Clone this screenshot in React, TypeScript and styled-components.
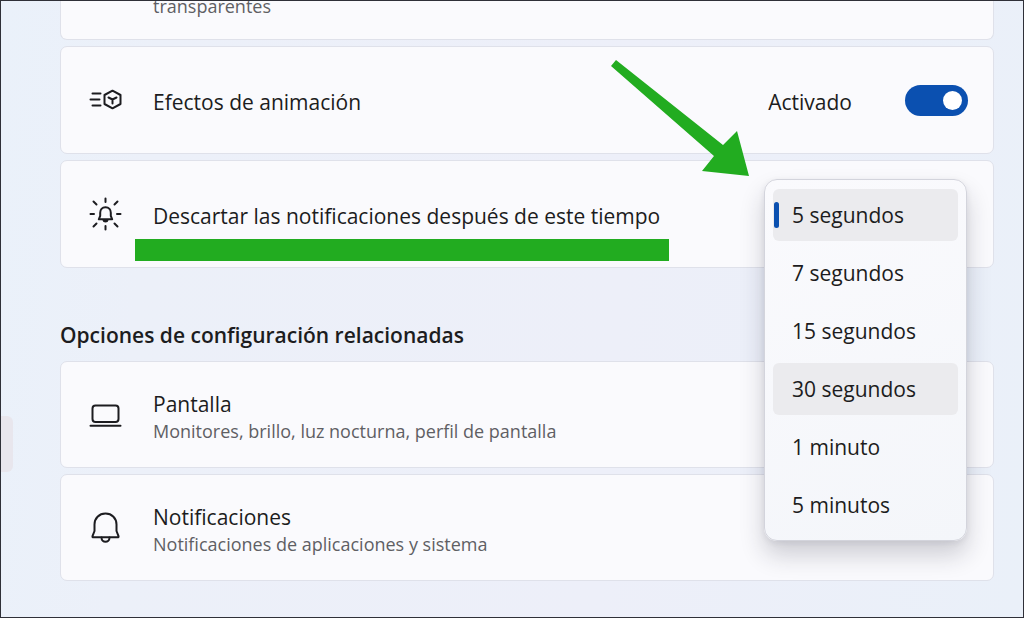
import { useState } from "react";
import styled, { createGlobalStyle } from "styled-components";

const GlobalStyle = createGlobalStyle`
  *, *::before, *::after { box-sizing: border-box; }
  body {
    margin: 0;
    color: #1c1c20;
    font-family: "Open Sans", "Noto Sans", sans-serif;
    font-size: 21px;
    line-height: 28px;
  }
  button, input { font: inherit; color: inherit; }
`;

const Window = styled.div`
  position: relative;
  min-height: 100vh;
  padding: 0 29px 35px 59px;
  overflow: hidden;
  border: 1px solid #2f3038;
  background: linear-gradient(95deg, #eaf1fa 0%, #ecf0f9 15%, #edeff9 60%, #eaf0f9 100%);
`;

const PaneHandle = styled.div`
  position: absolute;
  left: 0;
  top: 415px;
  width: 12px;
  height: 56px;
  border-radius: 0 6px 6px 0;
  background: #e8e6ed;
`;

const List = styled.section`
  display: flex;
  flex-direction: column;
  gap: 6px;
`;

const Card = styled.div<{ $tall?: boolean }>`
  position: relative;
  display: flex;
  align-items: center;
  min-height: ${(p) => (p.$tall ? 108 : 107)}px;
  padding: 0 25px 0 28px;
  border: 1px solid #dfe1ea;
  border-radius: 7px;
  background: #fafafd;
`;

const CutCard = styled(Card)`
  align-items: flex-start;
  min-height: 39px;
  padding-left: 92px;
  border-top: 0;
  border-radius: 0 0 7px 7px;
`;

const LinkCard = styled(Card).attrs({ as: "a" })`
  color: inherit;
  text-decoration: none;
`;

const IconBox = styled.span`
  display: flex;
  flex: none;
  width: 64px;
`;

const Texts = styled.div`
  display: flex;
  flex: 1;
  flex-direction: column;
  padding-top: 4px;
`;

const Title = styled.span`
  position: relative;
  align-self: flex-start;
`;

const Detail = styled.span`
  color: #5f5f64;
  font-size: 18px;
  line-height: 26px;
`;

const CutDetail = styled(Detail)`
  line-height: 10px;
`;

const Heading = styled.h2`
  margin: 53px 0 12px;
  font-size: 21px;
  font-weight: 600;
  line-height: 28px;
`;

const SwitchLabel = styled.label`
  display: flex;
  align-items: center;
  gap: 53px;
`;

const SwitchText = styled.span`
  padding-top: 4px;
`;

const Switch = styled.input`
  appearance: none;
  width: 63px;
  height: 31px;
  margin: 0;
  padding: 6px;
  border-radius: 16px;
  background: #8a8a90;
  &::before {
    content: "";
    display: block;
    width: 19px;
    height: 19px;
    border-radius: 50%;
    background: #fff;
  }
  &:checked { background: #0b50b0; }
  &:checked::before { margin-left: auto; }
`;

const Underline = styled.span`
  position: absolute;
  top: 37px;
  left: -18px;
  right: -9px;
  height: 22px;
  background: #22ac20;
`;

const Menu = styled.div`
  position: absolute;
  z-index: 2;
  top: 18px;
  right: 26px;
  display: flex;
  flex-direction: column;
  gap: 6px;
  width: 203px;
  padding: 9px 8px;
  border: 1px solid #d3d4dc;
  border-radius: 13px;
  background: linear-gradient(160deg, #fafafd, #f4f6fa);
  box-shadow: 0 14px 24px rgba(30, 30, 50, 0.2), 0 2px 6px rgba(30, 30, 50, 0.08);
`;

const Option = styled.button<{ $active: boolean }>`
  position: relative;
  height: 52px;
  padding: 0 19px;
  border: 0;
  border-radius: 6px;
  background: ${(p) => (p.$active ? "#ebebee" : "transparent")};
  text-align: left;
  &[aria-selected="true"]::before {
    content: "";
    position: absolute;
    left: 1px;
    top: 13px;
    width: 5px;
    height: 26px;
    border-radius: 3px;
    background: #0b50b0;
  }
`;

const Arrow = styled.svg`
  position: absolute;
  z-index: 3;
  top: -101px;
  right: 243px;
`;

const svgProps = {
  width: 34,
  height: 36,
  viewBox: "0 0 34 36",
  fill: "none",
  stroke: "#1c1c20",
  strokeWidth: 2,
  strokeLinecap: "round" as const,
  strokeLinejoin: "round" as const,
  "aria-hidden": true,
};

const AnimationIcon = () => (
  <svg {...svgProps}>
    <path d="M3.5 11.5H11.5M1.5 17.5H10.5M3.5 23.5H11.5" />
    <path d="M23.5 8.7L31.5 13V22L23.5 26.3L15.5 22V13Z" />
    <path d="M19.5 15.5L23.5 17.5L27.5 15.5M23.5 17.5V21.5" />
  </svg>
);

const AlertIcon = () => (
  <svg {...svgProps}>
    <path d="M16.5 2.5V6M16.5 30V33.5M1.5 18H5M28 18H31.5M4.5 5.5L7.5 8.5M28.5 5.5L25.5 8.5M4.5 30.5L7.5 27.5M28.5 30.5L25.5 27.5" />
    <path d="M16.5 11.2C13 11.2 11.2 13.8 11.2 16.7V19.8L9.8 23.3H23.2L21.8 19.8V16.7C21.8 13.8 20 11.2 16.5 11.2Z" />
    <path d="M14.5 24C14.8 26 18.2 26 18.5 24Z" fill="#1c1c20" />
  </svg>
);

const LaptopIcon = () => (
  <svg {...svgProps}>
    <rect x="3.5" y="8.5" width="26" height="16.5" rx="3" />
    <path d="M1.5 28.7H31.5" />
  </svg>
);

const BellIcon = () => (
  <svg {...svgProps}>
    <path d="M16.5 3.5C10 3.5 5.5 8.3 5.5 14.5V21L3.5 26.2Q3.2 27.3 4.4 27.3H28.6Q29.8 27.3 29.5 26.2L27.5 21V14.5C27.5 8.3 23 3.5 16.5 3.5Z" />
    <path d="M12.5 27.5C12.5 33.2 20.5 33.2 20.5 27.5" />
  </svg>
);

const times = ["5 segundos", "7 segundos", "15 segundos", "30 segundos", "1 minuto", "5 minutos"];

export default function App() {
  const [selected, setSelected] = useState(times[0]);
  const [hovered, setHovered] = useState(times[3]);

  return (
    <Window>
      <GlobalStyle />
      <PaneHandle />
      <List>
        <CutCard>
          <CutDetail>transparentes</CutDetail>
        </CutCard>
        <Card $tall>
          <IconBox><AnimationIcon /></IconBox>
          <Texts><Title>Efectos de animación</Title></Texts>
          <SwitchLabel>
            <SwitchText>Activado</SwitchText>
            <Switch type="checkbox" role="switch" defaultChecked />
          </SwitchLabel>
        </Card>
        <Card $tall>
          <IconBox><AlertIcon /></IconBox>
          <Texts>
            <Title>
              Descartar las notificaciones después de este tiempo
              <Underline />
            </Title>
          </Texts>
          <Arrow width="139" height="117" viewBox="611 60 139 117" aria-hidden="true">
            <path d="M611 66L616 60L723 145L737 131L749 176L702 171L714 156Z" fill="#22ac20" />
          </Arrow>
          <Menu role="listbox" aria-label="Descartar las notificaciones después de este tiempo">
            {times.map((time) => (
              <Option
                key={time}
                type="button"
                role="option"
                aria-selected={time === selected}
                $active={time === selected || time === hovered}
                onClick={() => setSelected(time)}
                onMouseEnter={() => setHovered(time)}
              >
                {time}
              </Option>
            ))}
          </Menu>
        </Card>
      </List>
      <Heading>Opciones de configuración relacionadas</Heading>
      <List>
        <LinkCard href="#pantalla">
          <IconBox><LaptopIcon /></IconBox>
          <Texts>
            <Title>Pantalla</Title>
            <Detail>Monitores, brillo, luz nocturna, perfil de pantalla</Detail>
          </Texts>
        </LinkCard>
        <LinkCard href="#notificaciones">
          <IconBox><BellIcon /></IconBox>
          <Texts>
            <Title>Notificaciones</Title>
            <Detail>Notificaciones de aplicaciones y sistema</Detail>
          </Texts>
        </LinkCard>
      </List>
    </Window>
  );
}
